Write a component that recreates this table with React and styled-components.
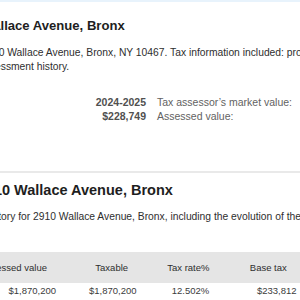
import React from "react";
import styled, { createGlobalStyle } from "styled-components";

const Global = createGlobalStyle`
  html, body { margin: 0; padding: 0; background: #fff; }
  body { font-family: "Liberation Sans", Arial, Helvetica, sans-serif; }
`;

const Page = styled.div`
  width: 300px;
  height: 300px;
  overflow: hidden;
  background: #fff;
`;

const TopStrip = styled.div`
  height: 2px;
  background: #e8f3fc;
`;

const Heading = styled.h2`
  margin: ${(p) => p.$top}px 0 0 ${(p) => p.$shift}px;
  font-size: ${(p) => p.$size}px;
  line-height: ${(p) => p.$lh}px;
  font-weight: 700;
  color: #1e1e1e;
  white-space: nowrap;
`;

const Para = styled.p`
  margin: ${(p) => p.$top}px 0 0 ${(p) => p.$shift}px;
  width: ${(p) => (p.$width ? `${p.$width}px` : "auto")};
  text-indent: ${(p) => p.$indent || 0}px;
  font-size: 10.3px;
  line-height: 14.5px;
  color: #2e2e2e;
  white-space: ${(p) => (p.$nowrap ? "nowrap" : "normal")};
`;

const KeyValues = styled.div`
  margin: 20.7px 0 0 0;
  display: grid;
  grid-template-columns: 146px auto;
  column-gap: 11px;
  font-size: 10.5px;
  line-height: 14px;
  white-space: nowrap;
`;

const KVValue = styled.div`
  text-align: right;
  font-weight: 700;
  color: #505050;
`;

const KVLabel = styled.div`
  color: #626262;
`;

const Divider = styled.hr`
  margin: 47.6px 0 0 0;
  border: 0;
  border-top: 2px solid #e9e9e9;
  height: 0;
`;

const Table = styled.div`
  margin: 27.3px 0 0 -44px;
  display: grid;
  grid-template-columns: 115.4px 80.6px 72.7px 87.3px;
  font-size: 9.5px;
  white-space: nowrap;
`;

const HeadCell = styled.div`
  background: #e5e5e5;
  line-height: 31px;
  text-align: center;
  color: #2e2e2e;
`;

const Cell = styled.div`
  line-height: 16px;
  text-align: right;
  padding-right: 15.4px;
  color: #3c3c3c;
`;

const headers = ["Assessed value", "Taxable", "Tax rate%", "Base tax"];
const row = ["$1,870,200", "$1,870,200", "12.502%", "$233,812"];

export default function App() {
  return (
    <Page>
      <Global />
      <TopStrip />
      <Heading $top={15.5} $shift={-51.4} $size={13.1} $lh={16}>
        2910 Wallace Avenue, Bronx
      </Heading>
      <Para $top={12.2} $shift={-21} $indent={2.5} $width={470}>
        2910 Wallace Avenue, Bronx, NY 10467. Tax information included: property tax, market value and assessment history.
      </Para>
      <KeyValues>
        <KVValue>2024-2025</KVValue>
        <KVLabel>Tax assessor’s market value:</KVLabel>
        <KVValue>$228,749</KVValue>
        <KVLabel>Assessed value:</KVLabel>
      </KeyValues>
      <Divider />
      <Heading $top={8} $shift={-22.2} $size={14.5} $lh={18}>
        2910 Wallace Avenue, Bronx
      </Heading>
      <Para $top={11.2} $shift={-73.4} $nowrap>
        Property tax history for 2910 Wallace Avenue, Bronx, including the evolution of the assessed value and taxes.
      </Para>
      <Table>
        {headers.map((h) => (
          <HeadCell key={h}>{h}</HeadCell>
        ))}
        {row.map((v, i) => (
          <Cell key={i}>{v}</Cell>
        ))}
      </Table>
    </Page>
  );
}
